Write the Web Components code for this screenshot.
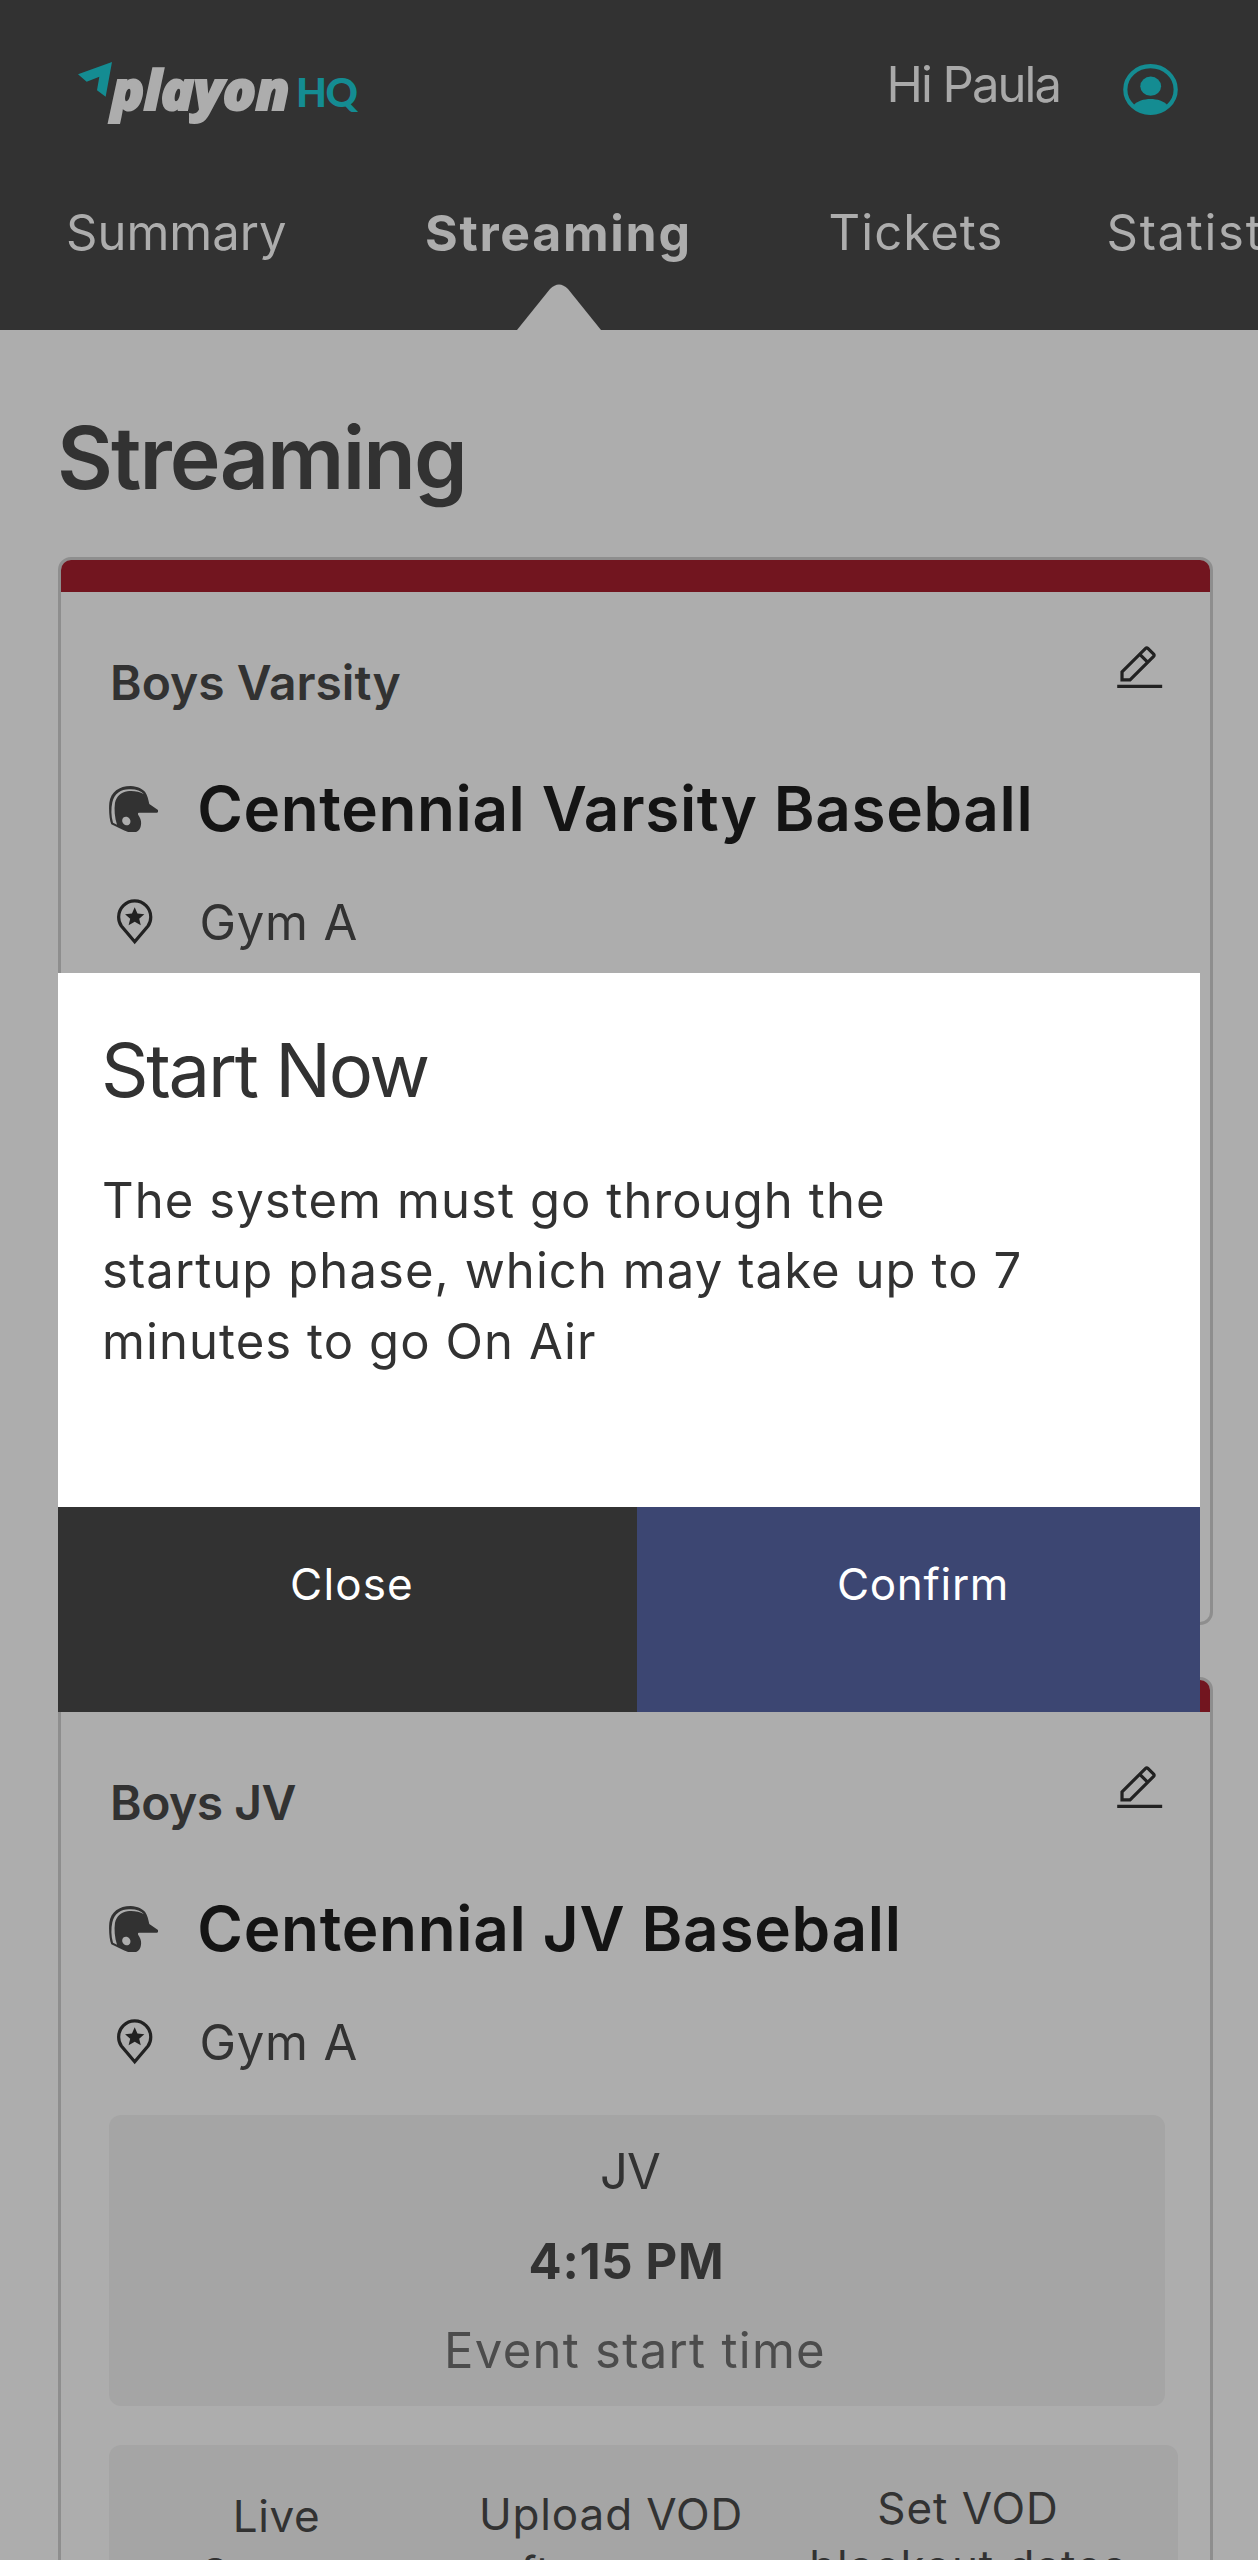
<!DOCTYPE html>
<html lang="en">
<head>
<meta charset="utf-8">
<title>PlayOn HQ – Streaming</title>
<style>
  html, body { margin: 0; padding: 0; }
  body { width: 1258px; height: 2560px; overflow: hidden; background: #adadad; color: #323232; font-family: Inter, "Liberation Sans", sans-serif; }
</style>
</head>
<body>
<hq-app></hq-app>
<script>
const define = (name, html) => {
  const template = document.createElement('template');
  template.innerHTML = html;
  customElements.define(name, class extends HTMLElement {
    constructor() {
      super();
      this.attachShadow({ mode: 'open' }).appendChild(template.content.cloneNode(true));
    }
  });
};

define('hq-logo', `
  <style>
    :host { display: flex; align-items: flex-start; height: 70px; }
    svg { display: block; flex: none; width: 34px; height: 35px; margin-top: 8px; }
    .word { font: italic 800 55px/70px "Open Sans", sans-serif; letter-spacing: -.7px; color: #adadad; margin-left: -1px; width: 185px; white-space: nowrap; -webkit-text-stroke: 2px #adadad; }
    .hq { font: 900 40px/70px Lato, sans-serif; letter-spacing: -1.4px; color: #148c92; margin-top: 3px; }
  </style>
  <svg viewBox="84 67 102 105"><path fill="#148c92" d="M186 67 84 104 110 126 148 111 141 152 167 171z"/></svg>
  <span class="word">playon</span><span class="hq">HQ</span>`);

define('icon-avatar', `
  <style>:host { display: block; } svg { display: block; width: 55px; height: 51px; }</style>
  <svg viewBox="0 0 55 51">
    <ellipse cx="27.5" cy="25.5" rx="25.2" ry="23.4" fill="none" stroke="#148c92" stroke-width="4.2"/>
    <ellipse cx="27.7" cy="22.2" rx="10.4" ry="9.6" fill="#148c92"/>
    <path fill="#148c92" d="M10.5 41.2C14 37 21 35 27.5 35s13.500 2 17 6.200C40 47 34 50.300 27.500 50.300S15 47 10.500 41.200z"/>
  </svg>`);

define('icon-edit', `
  <style>:host { display: block; } svg { display: block; width: 51.400px; height: 51.400px; }</style>
  <svg viewBox="0 0 32 32" fill="#222"><path d="M2 26h28v2H2zM25.400 9c.8-.8.8-2 0-2.800l-3.600-3.600c-.8-.8-2-.8-2.800 0l-15 15V24h6.400l15-15zm-5-5L24 7.600l-3 3L17.400 7l3-3zM6 22v-3.600l10-10 3.600 3.600-10 10H6z"/></svg>`);

define('icon-helmet', `
  <style>:host { display: block; } svg { display: block; width: 49.300px; height: 46.700px; }</style>
  <svg viewBox="57 78 148 140">
    <path fill="#323232" d="M64 193C58 178 56 150 58 128C62 96 88 78 122 78C144 79 158 87 166 97C173 107 175 120 178 132L203 149C206 152 205 158 200 158H146C142 160 144 165 148 170C155 180 155 196 149 207C143 217 130 220 117 217C98 210 82 202 64 193z"/>
    <path fill="#adadad" d="M69 188C63 168 63 145 67 127C73 101 93 88 117 88C137 87 152 92 162 103C148 94 128 92 112 94C94 97 80 108 75 128C72 148 74 172 81 194z"/>
    <ellipse cx="109" cy="183" rx="12" ry="13.500" transform="rotate(-35 109 183)" fill="#adadad"/>
  </svg>`);

define('icon-pin', `
  <style>:host { display: block; } svg { display: block; width: 51.400px; height: 51.400px; }</style>
  <svg viewBox="0 0 32 32">
    <path fill="none" stroke="#222" stroke-width="2" d="M16 28.450 7.700 18.650C6.600 17.100 6 15.200 6 13a10 10 0 0 1 20 0c0 2.200-.6 4.100-1.700 5.650z"/>
    <path fill="#222" d="M16 7l1.700 3.900 4.300.4-3.200 2.800 1 4.100L16 16l-3.800 2.200 1-4.100L10 11.300l4.300-.4z"/>
  </svg>`);

define('nav-tab', `
  <style>
    :host { display: flex; flex-direction: column; flex: none; height: 127px; font: 400 49px/60px Inter, sans-serif; color: #adadad; white-space: nowrap; }
    :host([active]) { font-size: 50px; font-weight: 700; }
    svg { display: none; width: 84px; height: 46px; margin: 21px 0 0 92px; }
    :host([active]) svg { display: block; }
  </style>
  <span><slot></slot></span>
  <svg viewBox="0 0 84 46"><path fill="#adadad" d="M0 46 33 5Q42-4 51 5L84 46z"/></svg>`);

define('hq-header', `
  <style>
    :host { display: flex; flex-direction: column; height: 330px; background: #323232; overflow: hidden; }
    .top { display: flex; align-items: flex-start; padding: 54px 80px 0 78px; height: 149px; box-sizing: border-box; }
    hq-logo { flex: 1; }
    .hi { font: 400 49px/60px Inter, sans-serif; letter-spacing: -1.960px; color: #a9a9a9; margin: 1px 63px 0 0; }
    icon-avatar { margin-top: 10px; }
    nav { display: flex; padding: 54px 0 0 66px; }
  </style>
  <div class="top"><hq-logo></hq-logo><span class="hi">Hi Paula</span><icon-avatar></icon-avatar></div>
  <nav>
    <nav-tab style="width:359px">Summary</nav-tab>
    <nav-tab active style="width:403.500px;letter-spacing:1.700px">Streaming</nav-tab>
    <nav-tab style="width:278px;letter-spacing:1.100px">Tickets</nav-tab>
    <nav-tab style="letter-spacing:1.700px">Statistics</nav-tab>
  </nav>`);

define('event-card', `
  <style>
    :host { display: block; box-sizing: border-box; width: 1155px; height: 1068px; border: 3px solid #8e8e8e; border-radius: 13px; overflow: hidden; }
    .bar { height: 32px; background: #72151f; }
    .body { padding: 51px 32px 0 48px; }
    .row { display: flex; align-items: center; white-space: nowrap; }
    .head { align-items: flex-start; justify-content: space-between; height: 70px; padding-right: 13px; }
    .team { font: 600 48px/60px Inter, sans-serif; margin: 10px 0 0 1px; }
    .name { margin-top: 58px; gap: 39px; font: 600 62px/76px Inter, sans-serif; letter-spacing: var(--name-spacing, .6px); color: #141414; }
    .place { margin-top: 46px; gap: 39px; font: 400 49px/60px Inter, sans-serif; letter-spacing: .8px; }
    icon-pin { margin-top: -3px; }
    .more { display: flex; flex-direction: column; align-items: flex-start; margin-top: 42px; gap: 39px; }
  </style>
  <div class="bar"></div>
  <div class="body">
    <div class="row head"><span class="team"><slot name="team"></slot></span><icon-edit></icon-edit></div>
    <div class="row name"><icon-helmet></icon-helmet><slot name="name"></slot></div>
    <div class="row place"><icon-pin></icon-pin><slot name="place"></slot></div>
    <div class="more"><slot></slot></div>
  </div>`);

define('time-panel', `
  <style>
    :host { display: flex; flex-direction: column; box-sizing: border-box; width: 1056px; height: 291px; padding-top: 12px; border-radius: 12px; background: #a5a5a5; text-align: center; font: 400 49px/89.700px Inter, sans-serif; white-space: nowrap; }
    .level { padding-right: 14px; letter-spacing: -.9px; }
    .time { padding-right: 21px; font-weight: 700; letter-spacing: .7px; }
    .label { padding-right: 4px; color: #4c4c4c; letter-spacing: 1.280px; }
  </style>
  <div class="level"><slot name="level"></slot></div>
  <div class="time"><slot name="time"></slot></div>
  <div class="label"><slot name="label"></slot></div>`);

define('options-panel', `
  <style>
    :host { display: grid; grid-template-columns: 335px 334px 380px; box-sizing: border-box; width: 1069px; height: 330px; border-radius: 12px; background: #a5a5a5; text-align: center; font: 400 44px/57.600px Inter, sans-serif; white-space: nowrap; }
    .a { padding-top: 43px; letter-spacing: .6px; }
    .b { padding-top: 41px; letter-spacing: .87px; }
    .c { padding-top: 35px; letter-spacing: .95px; }
  </style>
  <div class="a">Live<br>Stream</div>
  <div class="b">Upload VOD<br>after game</div>
  <div class="c">Set VOD<br>blackout dates</div>`);

define('confirm-dialog', `
  <style>
    :host { position: absolute; left: 58px; top: 973px; width: 1142px; height: 739px; display: flex; flex-direction: column; background: #fff; color: #323232; }
    .content { box-sizing: border-box; height: 534px; padding: 52px 43px 0; }
    h2 { margin: 0; font: 400 74px/90px Inter, sans-serif; letter-spacing: -2.240px; }
    p { margin: 51px 0 0 1px; font: 400 49px/70.400px Inter, sans-serif; letter-spacing: 1.080px; white-space: nowrap; }
    footer { display: flex; flex: 1; font: 400 44px/56px Inter, sans-serif; color: #fff; text-align: center; }
    footer div { box-sizing: border-box; padding: 49px 0 0 9px; }
    .close { width: 579px; background: #323232; letter-spacing: 1.150px; }
    .confirm { flex: 1; background: #3c4672; letter-spacing: .71px; font-variant-ligatures: none; }
  </style>
  <div class="content">
    <h2>Start Now</h2>
    <p>The system must go through the<br>startup phase, which may take up to 7<br>minutes to go On Air</p>
  </div>
  <footer><div class="close">Close</div><div class="confirm">Confirm</div></footer>`);

define('hq-app', `
  <style>
    :host { display: block; position: relative; width: 1258px; height: 2560px; overflow: hidden; background: #adadad; }
    main { display: flex; flex-direction: column; align-items: flex-start; padding: 78px 0 0 57px; }
    h1 { margin: 0 0 49px; font: 600 86px/100px Inter, sans-serif; letter-spacing: -1.900px; }
    event-card { margin-left: 1px; }
    event-card + event-card { margin-top: 52px; height: 1200px; --name-spacing: .7px; }
  </style>
  <hq-header></hq-header>
  <main>
    <h1>Streaming</h1>
    <event-card>
      <span slot="team">Boys Varsity</span>
      <span slot="name">Centennial Varsity Baseball</span>
      <span slot="place">Gym A</span>
    </event-card>
    <event-card>
      <span slot="team" style="letter-spacing:-.5px">Boys JV</span>
      <span slot="name">Centennial JV Baseball</span>
      <span slot="place">Gym A</span>
      <time-panel>
        <span slot="level">JV</span>
        <span slot="time">4:15 PM</span>
        <span slot="label">Event start time</span>
      </time-panel>
      <options-panel></options-panel>
    </event-card>
  </main>
  <confirm-dialog></confirm-dialog>`);
</script>
</body>
</html>
